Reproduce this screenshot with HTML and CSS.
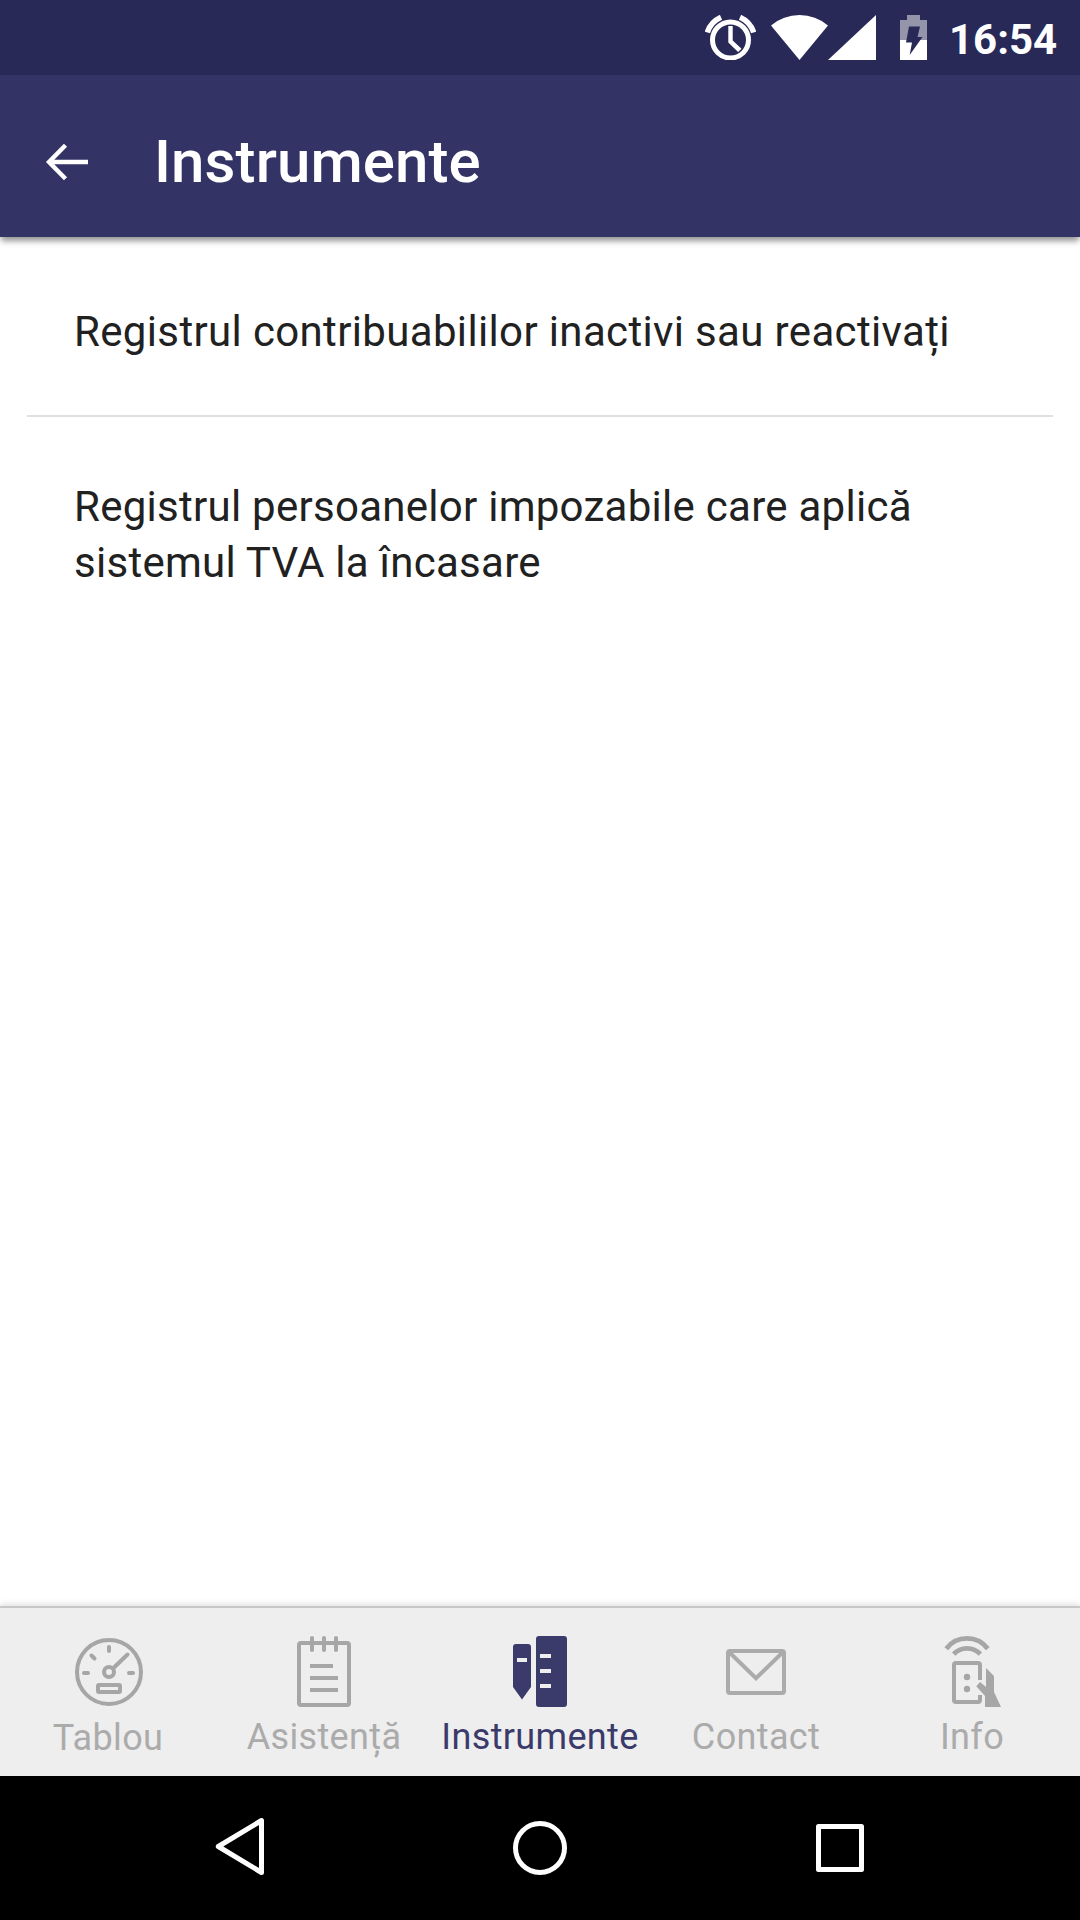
FILE: index.html
```html
<!DOCTYPE html>
<html lang="ro">
<head>
<meta charset="utf-8">
<title>Instrumente</title>
<link rel="stylesheet" href="styles.css">
</head>
<body>
<div class="screen">
  <div class="status-bar">
    <svg class="status-alarm" width="51" height="45" viewBox="0 0 51 45">
      <circle cx="25.5" cy="25" r="18" fill="none" stroke="#fff" stroke-width="5"/>
      <path d="M23.3 11h4.4v14.5l8.8 8.2-3.4 3.2-9.8-9.5z" fill="#fff"/>
      <path d="M2.3 17.5A25 25 0 0 1 16 2.3M48.7 17.5A25 25 0 0 0 35 2.3" fill="none" stroke="#fff" stroke-width="5.5"/>
    </svg>
    <svg class="status-signal" width="105" height="45" viewBox="0 0 105 45">
      <path d="M0 10.5Q12.5 0 28.5 0T57 10.5L28.5 45z" fill="#fff"/>
      <path d="M57 45L105 0V45z" fill="#fff"/>
    </svg>
    <svg class="status-battery" width="27" height="45" viewBox="0 0 27 45">
      <path d="M0 5H7V0h13v5h7v20H0z" fill="#9494ab"/>
      <path d="M0 25h27v20H0z" fill="#fff"/>
      <path d="M9 11.5H20L17.5 22H22.5L9.7 40 12 27.5H6z" fill="#292957"/>
    </svg>
    <span class="clock">16:54</span>
  </div>

  <header class="app-bar">
    <svg class="back-icon" width="44" height="40" viewBox="0 0 44 40">
      <path d="M20.5 3.2L4 20l16.5 16.8M4 20H43" fill="none" stroke="#fff" stroke-width="4.4"/>
    </svg>
    <h1 class="app-title">Instrumente</h1>
  </header>

  <main class="list">
    <div class="list-item">Registrul contribuabililor inactivi sau reactivați</div>
    <div class="list-item">Registrul persoanelor impozabile care aplică sistemul TVA la încasare</div>
  </main>

  <nav class="tabs">
    <div class="tab tab-dashboard">
      <svg width="72" height="72" viewBox="0 0 72 72" fill="none" stroke="#a6a6a6" stroke-width="4" stroke-linecap="round">
        <circle cx="37" cy="37" r="32"/>
        <circle cx="37" cy="37" r="5"/>
        <path d="M37 12v4M12 38h4M57 38h4M19.5 20.5l3 3M55.5 19.5L41.5 33"/>
        <rect x="26" y="50" width="22" height="7" rx="1"/>
      </svg>
      <span>Tablou</span>
    </div>
    <div class="tab">
      <svg width="72" height="72" viewBox="0 0 72 72" fill="none" stroke="#a6a6a6" stroke-width="4">
        <rect x="11" y="8" width="50" height="62" rx="2"/>
        <path d="M24 3v12M36 3v12M48 3v12" stroke-linecap="round"/>
        <path d="M22 31h23M22 43h28M22 55h28"/>
      </svg>
      <span>Asistență</span>
    </div>
    <div class="tab tab-active">
      <svg width="72" height="72" viewBox="0 0 72 72" fill="#3a3a6b">
        <path fill-rule="evenodd" d="M12 9h12a3 3 0 0 1 3 3v40L18 64.5 9 52V12a3 3 0 0 1 3-3zM13 23v4h10v-4z"/>
        <path fill-rule="evenodd" d="M35 1h25a3 3 0 0 1 3 3v65a3 3 0 0 1-3 3H35a3 3 0 0 1-3-3V4a3 3 0 0 1 3-3zM36 19v4h11v-4zM36 34v4h11v-4zM36 49v4h11v-4z"/>
      </svg>
      <span>Instrumente</span>
    </div>
    <div class="tab">
      <svg width="72" height="72" viewBox="0 0 72 72" fill="none" stroke="#ababab" stroke-width="4">
        <rect x="8" y="16" width="56" height="42" rx="2"/>
        <path d="M9 17L36 43.3 63 17"/>
      </svg>
      <span>Contact</span>
    </div>
    <div class="tab">
      <svg width="72" height="72" viewBox="0 0 72 72" fill="#a6a6a6">
        <g fill="none" stroke="#a6a6a6">
          <path d="M10.3 13.7a26 26 0 0 1 41.4 0M17.7 19.2a18 18 0 0 1 26.6 0" stroke-width="4.8"/>
          <path d="M44 45V30a2 2 0 0 0-2-2H20a2 2 0 0 0-2 2v35a2 2 0 0 0 2 2h22a2 2 0 0 0 2-2v-5" stroke-width="4"/>
        </g>
        <circle cx="31" cy="42" r="3.2"/>
        <circle cx="31" cy="54" r="3.2"/>
        <path d="M50 33l8 8v16l7 15H49V61L40.3 51.3 44 47l6 5z"/>
      </svg>
      <span>Info</span>
    </div>
  </nav>

  <div class="system-nav">
    <svg width="60" height="60" viewBox="0 0 60 60"><path d="M51.5 2.5v52L8.3 28.5z"/></svg>
    <svg width="60" height="60" viewBox="0 0 60 60"><circle cx="30" cy="30" r="24.5"/></svg>
    <svg width="60" height="60" viewBox="0 0 60 60"><rect x="8.5" y="8.5" width="43" height="43"/></svg>
  </div>
</div>
</body>
</html>
```
FILE: styles.css
```css
* {
  box-sizing: border-box;
}

body {
  margin: 0;
  font-family: Roboto, "Liberation Sans", sans-serif;
}

svg {
  display: block;
  flex: none;
}

.screen {
  display: flex;
  flex-direction: column;
  width: 1080px;
  height: 1920px;
  background: #fff;
}

.status-bar {
  display: flex;
  align-items: center;
  justify-content: flex-end;
  height: 75px;
  padding-right: 23px;
  background: #292957;
  color: #fff;
}

.status-signal {
  margin-left: 15px;
}

.status-battery {
  margin-left: 24px;
}

.clock {
  width: 108px;
  margin-left: 22px;
  font-size: 42px;
  font-weight: 700;
  line-height: 49px;
  padding-top: 3px;
}

.app-bar {
  display: flex;
  align-items: center;
  height: 162px;
  padding: 12px 45px 0;
  background: #333366;
  color: #fff;
  box-shadow: 0 5px 6px -1px rgba(0, 0, 0, 0.42);
}

.app-title {
  margin: 0 0 0 65px;
  font-size: 60px;
  font-weight: 500;
  line-height: 70px;
  letter-spacing: 0.1px;
}

.list {
  flex: 1;
  padding: 0 27px;
}

.list-item {
  padding: 67px 47px 55px;
  color: #212121;
  font-size: 42px;
  line-height: 56px;
  letter-spacing: 0.35px;
}

.list-item + .list-item {
  padding-top: 62px;
  border-top: 2px solid #e0e0e0;
  letter-spacing: 0.27px;
}

.tabs {
  display: grid;
  grid-template-columns: repeat(5, 1fr);
  height: 170px;
  border-top: 2px solid #c8c8c8;
  background: #eee;
  box-shadow: 0 -2px 6px rgba(0, 0, 0, 0.12);
}

.tab {
  display: flex;
  flex-direction: column;
  align-items: center;
  padding-top: 27px;
  color: #ababab;
  font-size: 36px;
  line-height: 42px;
  letter-spacing: 0.35px;
}

.tab span {
  margin-top: 9px;
}

.tab-dashboard span {
  margin-top: 10px;
}

.tab-active {
  color: #3a3a6b;
}

.system-nav {
  display: flex;
  align-items: center;
  justify-content: center;
  gap: 240px;
  height: 144px;
  background: #000;
}

.system-nav svg {
  fill: none;
  stroke: #fff;
  stroke-width: 5;
  stroke-linejoin: round;
}
```
